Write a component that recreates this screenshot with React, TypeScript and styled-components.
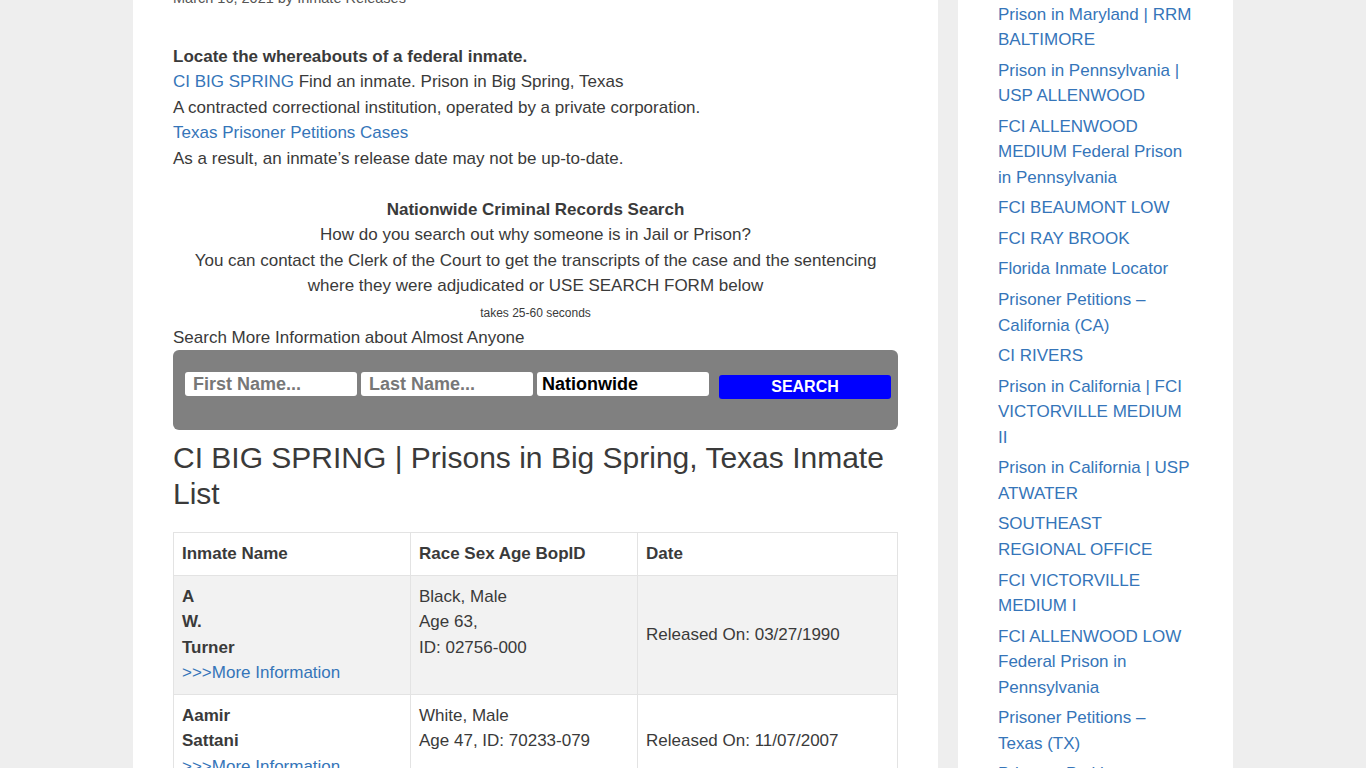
import React from "react";
import styled, { createGlobalStyle } from "styled-components";

const Global = createGlobalStyle`
  html, body { margin: 0; padding: 0; }
  body {
    background: #eeeeee;
    font-family: "Liberation Sans", Arial, Helvetica, sans-serif;
    color: #3a3a3a;
    font-size: 17px;
    line-height: 25.5px;
  }
  a { color: #3575b9; text-decoration: none; }
`;

const Page = styled.div`
  height: 100vh;
  overflow: hidden;
  display: flex;
  justify-content: center;
  gap: 20px;
`;

const Main = styled.main`
  width: 805px;
  flex: none;
  background: #fff;
  padding: 0 40px;
  box-sizing: border-box;
`;

const Sidebar = styled.aside`
  width: 275px;
  flex: none;
  background: #fff;
  padding: 1.5px 40px 0;
  box-sizing: border-box;
`;

const Meta = styled.div`
  margin-top: -14px;
  font-size: 14.5px;
  line-height: 25.5px;
  color: #555;
`;

const Content = styled.div`
  margin-top: 32px;
`;

const Para = styled.p<{ $center?: boolean; $last?: boolean }>`
  margin: 0 0 ${(p) => (p.$last ? "0" : "25.5px")};
  text-align: ${(p) => (p.$center ? "center" : "left")};
`;

const Small = styled.span`
  font-size: 12px;
`;

const Plain = styled.div`
  margin: 0;
  line-height: 24px;
`;

const SearchBox = styled.form`
  height: 80px;
  box-sizing: border-box;
  background: #808080;
  border-radius: 6px;
  padding: 22px 7px 0 12px;
  display: flex;
  align-items: flex-start;
  gap: 4px;
`;

const Field = styled.input<{ $filled?: boolean }>`
  width: 172px;
  height: 24px;
  box-sizing: border-box;
  border: none;
  border-radius: 3px;
  padding: 0 ${(p) => (p.$filled ? "5px" : "8px")};
  font-family: "Liberation Sans", Arial, sans-serif;
  font-weight: bold;
  font-size: 18px;
  color: #000;
  background: #fff;
  outline: none;
  &::placeholder { color: #777777; opacity: 1; }
`;

const SearchButton = styled.button`
  margin: 3px 0 0 6px;
  width: 172px;
  height: 24px;
  border: none;
  border-radius: 3px;
  background: #0000ff;
  color: #fff;
  font-family: "Liberation Sans", Arial, sans-serif;
  font-weight: bold;
  font-size: 16px;
  padding: 0;
`;

const Heading = styled.h2`
  font-size: 30px;
  line-height: 36px;
  font-weight: 400;
  margin: 10px 0 20px;
  color: #3a3a3a;
`;

const Table = styled.table`
  width: 100%;
  table-layout: fixed;
  border-collapse: collapse;
  border: 1px solid #e3e3e3;
`;

const Th = styled.th<{ $w?: string }>`
  width: ${(p) => p.$w ?? "auto"};
  text-align: left;
  padding: 8px;
  border: 1px solid #e3e3e3;
  font-weight: bold;
`;

const Row = styled.tr<{ $shade?: boolean }>`
  background: ${(p) => (p.$shade ? "#f2f2f2" : "#fff")};
`;

const Td = styled.td<{ $top?: boolean }>`
  padding: 8px;
  border: 1px solid #e3e3e3;
  vertical-align: ${(p) => (p.$top ? "top" : "middle")};
  text-align: left;
`;

const SideList = styled.ul`
  list-style: none;
  margin: 0;
  padding: 0;
`;

const SideItem = styled.li`
  font-size: 17px;
  line-height: 25.5px;
  margin-bottom: 5.1px;
`;

const sideLinks = [
  "Prison in Maryland | RRM BALTIMORE",
  "Prison in Pennsylvania | USP ALLENWOOD",
  "FCI ALLENWOOD MEDIUM Federal Prison in Pennsylvania",
  "FCI BEAUMONT LOW",
  "FCI RAY BROOK",
  "Florida Inmate Locator",
  "Prisoner Petitions – California (CA)",
  "CI RIVERS",
  "Prison in California | FCI VICTORVILLE MEDIUM II",
  "Prison in California | USP ATWATER",
  "SOUTHEAST REGIONAL OFFICE",
  "FCI VICTORVILLE MEDIUM I",
  "FCI ALLENWOOD LOW Federal Prison in Pennsylvania",
  "Prisoner Petitions – Texas (TX)",
  "Prisoner Petitions – Florida (FL)",
];

export default function App() {
  return (
    <>
      <Global />
      <Page>
        <Main>
          <Meta>March 16, 2021 by Inmate Releases</Meta>
          <Content>
            <Para>
              <strong>Locate the whereabouts of a federal inmate.</strong>
              <br />
              <a href="#">CI BIG SPRING</a> Find an inmate. Prison in Big Spring, Texas
              <br />
              A contracted correctional institution, operated by a private corporation.
              <br />
              <a href="#">Texas Prisoner Petitions Cases</a>
              <br />
              As a result, an inmate’s release date may not be up-to-date.
            </Para>
            <Para $center $last>
              <strong>Nationwide Criminal Records Search</strong>
              <br />
              How do you search out why someone is in Jail or Prison?
              <br />
              You can contact the Clerk of the Court to get the transcripts of the case and the sentencing
              <br />
              where they were adjudicated or USE SEARCH FORM below
              <br />
              <Small>takes 25-60 seconds</Small>
            </Para>
            <Plain>Search More Information about Almost Anyone</Plain>
            <SearchBox onSubmit={(e) => e.preventDefault()}>
              <Field placeholder="First Name..." />
              <Field placeholder="Last Name..." />
              <Field $filled defaultValue="Nationwide" readOnly />
              <SearchButton type="submit">SEARCH</SearchButton>
            </SearchBox>
            <Heading>CI BIG SPRING | Prisons in Big Spring, Texas Inmate List</Heading>
            <Table>
              <thead>
                <tr>
                  <Th $w="220px">Inmate Name</Th>
                  <Th $w="210px">Race Sex Age BopID</Th>
                  <Th>Date</Th>
                </tr>
              </thead>
              <tbody>
                <Row $shade>
                  <Td>
                    <strong>A</strong>
                    <br />
                    <strong>W.</strong>
                    <br />
                    <strong>Turner</strong>
                    <br />
                    <a href="#">&gt;&gt;&gt;More Information</a>
                  </Td>
                  <Td $top>
                    Black, Male
                    <br />
                    Age 63,
                    <br />
                    ID: 02756-000
                  </Td>
                  <Td>Released On: 03/27/1990</Td>
                </Row>
                <Row>
                  <Td>
                    <strong>Aamir</strong>
                    <br />
                    <strong>Sattani</strong>
                    <br />
                    <a href="#">&gt;&gt;&gt;More Information</a>
                  </Td>
                  <Td $top>
                    White, Male
                    <br />
                    Age 47, ID: 70233-079
                  </Td>
                  <Td>Released On: 11/07/2007</Td>
                </Row>
              </tbody>
            </Table>
          </Content>
        </Main>
        <Sidebar>
          <SideList>
            {sideLinks.map((t) => (
              <SideItem key={t}>
                <a href="#">{t}</a>
              </SideItem>
            ))}
          </SideList>
        </Sidebar>
      </Page>
    </>
  );
}
